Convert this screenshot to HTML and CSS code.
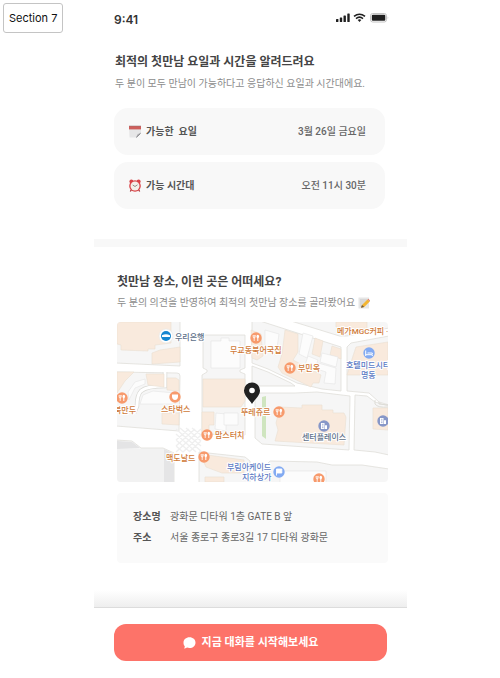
FILE: index.html
```html
<!DOCTYPE html>
<html lang="ko">
<head>
<meta charset="utf-8">
<meta name="viewport" content="width=device-width, initial-scale=1">
<title>첫만남 안내</title>
<link rel="stylesheet" href="styles.css">
</head>
<body>
<div class="board">
  <aside class="board-side"><span class="section-tag">Section 7</span></aside>

  <main class="phone">
    <header class="status">
      <span class="time">9:41</span>
      <svg class="status-icons" width="53" height="10" viewBox="0 0 53 10" aria-hidden="true">
        <g fill="#1f1f1f">
          <rect x="0" y="6" width="2.400" height="3" rx="0.6"/>
          <rect x="3.800" y="4.500" width="2.400" height="4.500" rx="0.6"/>
          <rect x="7.500" y="2.500" width="2.400" height="6.500" rx="0.6"/>
          <rect x="11.300" y="0.500" width="2.400" height="8.500" rx="0.6"/>
        </g>
        <g fill="none" stroke="#1f1f1f" stroke-width="1.600">
          <path d="M18 3.400Q23.500 -1 29 3.400"/>
          <path d="M20 5.600Q23.500 2.700 27 5.600"/>
        </g>
        <path d="M21.700 7Q23.500 5.600 25.300 7L23.500 9Z" fill="#1f1f1f"/>
        <rect x="34.500" y="0.500" width="16" height="8.500" rx="2.200" fill="#fff" stroke="#c4c4c4"/>
        <rect x="35.800" y="1.800" width="13.500" height="6" rx="1" fill="#1f1f1f"/>
        <path d="M51.700 3.300Q53 4.700 51.700 6.200Z" fill="#bdbdbd"/>
      </svg>
    </header>

    <section class="schedule">
      <div class="heading">
        <h1>최적의 첫만남 요일과 시간을 알려드려요</h1>
        <p>두 분이 모두 만남이 가능하다고 응답하신 요일과 시간대에요.</p>
      </div>
      <div class="card">
        <svg width="12" height="13" viewBox="0 0 12 13" aria-hidden="true">
          <path d="M0 1.500H12V8L8 12.500H0.500Z" fill="#e6e6e7"/>
          <path d="M12 8L7.500 12.500L8.300 9Z" fill="#c4c4c6"/>
          <path d="M7.300 12.300L11.500 8.300" stroke="#77777b" stroke-width="1"/>
          <rect y="1" width="12" height="3.400" fill="#cf5f5c"/>
          <path d="M0.500 1H11.500" stroke="#8d6f70" stroke-width="1.200" stroke-dasharray="1 1"/>
        </svg>
        <span class="card-label">가능한 &nbsp;요일</span>
        <span class="card-value">3월 26일 금요일</span>
      </div>
      <div class="card">
        <svg width="12" height="13" viewBox="0 0 12 13" aria-hidden="true">
          <path d="M2.500 10.500L1.300 12.500M9.500 10.500L10.700 12.500" stroke="#a63238" stroke-width="1.300"/>
          <circle cx="2.400" cy="2.500" r="2" fill="#d94347"/>
          <circle cx="9.600" cy="2.500" r="2" fill="#d94347"/>
          <circle cx="6" cy="7" r="5.800" fill="#d94347"/>
          <circle cx="6" cy="7" r="4.500" fill="#f4efe9"/>
          <path d="M3.700 6L6 7.500L8.500 5.800" fill="none" stroke="#77736f" stroke-width="0.800"/>
        </svg>
        <span class="card-label">가능 시간대</span>
        <span class="card-value">오전 11시 30분</span>
      </div>
    </section>

    <section class="place">
      <h2>첫만남 장소, 이런 곳은 어떠세요?</h2>
      <p class="place-note">두 분의 의견을 반영하여 최적의 첫만남 장소를 골라봤어요
        <svg width="12" height="12" viewBox="0 0 12 12" aria-hidden="true">
          <rect x="0.500" y="0.500" width="10.500" height="11" fill="#e6e6e6"/>
          <path d="M2 3H9M2 5H8M2 7H6M2 9H5" stroke="#bcbcbc" stroke-width="0.700"/>
          <path d="M3 10.800L4 8L9.500 2.500L11.800 4.600L6.200 10Z" fill="#f3b531"/>
          <path d="M9.500 2.500L10.400 1.800L12 3.600L11.800 4.600Z" fill="#df7c76"/>
          <path d="M3 10.800L4 8L6.200 10Z" fill="#6b5542"/>
        </svg>
      </p>

      <svg class="map" viewBox="0 0 271 160" role="img" aria-label="광화문 디타워 주변 지도">
        <defs>
          <g id="food">
            <circle r="5.700" fill="#f79a6c"/>
            <path d="M-2.800-3V-1.300Q-2.800 0-1.800 0V3M-1.800-3V0M-0.800-3V-1.300Q-0.800 0-1.800 0" fill="none" stroke="#fff" stroke-width="0.800"/>
            <path d="M1.800 3V-0.200" stroke="#fff" stroke-width="1"/>
            <ellipse cx="1.800" cy="-1.400" rx="1.300" ry="1.800" fill="#fff"/>
          </g>
          <g id="office">
            <circle r="5.700" fill="#8797c8"/>
            <path d="M-3 3V-3H0.500V3ZM1 3V-0.800H3V3Z" fill="#fff"/>
            <path d="M-2-1.700H-0.500M-2 0H-0.500M-2 1.600H-0.500" stroke="#8797c8" stroke-width="0.700"/>
          </g>
        </defs>
        <rect width="271" height="160" fill="#fff"/>

        <g fill="#f6f6f6" stroke="#dfded9" stroke-width="0.800">
          <path d="M-1-1H63V44L-1 41Z"/>
          <path d="M-1 50L60 51Q63 51 63 54L62 109L-1 104Z"/>
          <path d="M86 13H128V46L123 48V50L128 52V113L85 112V53L90 50V48L86 46Z"/>
          <path d="M135-1H143L224 25V69L205 67L180 61L151 47L135 41Z"/>
          <path d="M135 44L151 50L174 61L178 64H135Z"/>
          <path d="M174-1L216 12Q222 15 230 14L272 6V-1Z"/>
          <path d="M230 25L234 21L272 14V83L262 80L252 71L230 69Z"/>
          <path d="M138 71L178 71L200 70L233 74L232 128L145 122L138 116Z"/>
          <path d="M238 73L250 74L258 80L272 84V133L258 130L237 128Z"/>
          <path d="M82 130L128 135L133 139V161H82Z"/>
          <path d="M153 139L200 140L215 143L245 143L272 147V161H145V147Z"/>
          <path d="M-1 118L15 119L24 126L46 126L57 131V161H-1Z"/>
        </g>
        <path d="M0 119L15 120L23 126L0 127Z" fill="#e4e4e5"/>
        <path d="M47 127L57 132V160H47Z" fill="#e5e5e6"/>
        <path d="M0 127H47V160H0Z" fill="#f2f2f2"/>
        <path d="M48 50V64Q30 64 24 69Q20 73 20 84L17 91" fill="none" stroke="#d9d9d5" stroke-width="4.500"/>
        <path d="M48 49V64Q30 64 24 69Q20 73 20 84L17 92" fill="none" stroke="#fff" stroke-width="3"/>
        <path d="M258 78V82Q261 86 271 85M262 80V82L271 83" fill="none" stroke="#dddcd6"/>

        <g fill="#f9eadd" stroke="#eadfd2" stroke-width="0.600">
          <path d="M0 0H54V21L38 23V27H31V29L4 28V23L0 22Z"/>
          <path d="M35 31L43 28L63 25V40L35 42Z"/>
          <path d="M0 50H17L8 59L0 71Z"/>
          <path d="M29 52H47V65L31 63Z"/>
          <path d="M50 56H59L62 58V69L50 68Z"/>
          <path d="M45 91H62V103L45 102Z"/>
          <path d="M86 57H128V79L124 85H86Z"/>
          <path d="M85 90H97V103H92V112L85 113Z"/>
          <path d="M134 8L144 12L146 34L140 38L135 36Z"/>
          <path d="M168 8L181 12V30L176 38L197 49L204 53L202 61H196L194 65L165 51L161 45L165 32Z"/>
          <path d="M198 16L206 19L203 35L195 32Z"/>
          <path d="M215 24L224 27V37L213 33Z"/>
          <path d="M236 34L239 25L271 20V53H230Z"/>
          <path d="M163 85L185 86V83H205V88H216V91H227L229 95L227 123L158 119L161 108L159 101Z"/>
          <path d="M256 86H271V108L256 107Z"/>
          <path d="M83 132L127 138V151H105L89 145Z"/>
          <path d="M88 155H107V160H88Z"/>
          <path d="M219 0H250V8L232 10L219 5Z"/>
        </g>
        <g fill="#fcfcfc" stroke="#e4e4e4" stroke-width="0.600">
          <path d="M94 19H104V16H112V19H123V46H94Z"/>
          <path d="M11 70L18 60L28 57V62L18 66L12 78Z"/>
          <path d="M26 73L36 69L58 71V82H23Z"/>
          <path d="M99 91L109 92V109L98 107Z"/>
          <path d="M107 91H121V103H107Z"/>
          <path d="M186 11L196 14L190 36L182 32Z"/>
          <path d="M205 31L221 35L219 45L203 40Z"/>
          <path d="M201 41L219 46L218 62L207 61L209 50L200 47Z"/>
          <path d="M191 34L201 38L198 46L188 43Z"/>
          <path d="M148 8L162 12L159 33L148 28Z"/>
          <path d="M163 149H209V161H163Z"/>
        </g>
        <path d="M145 75L149 74V117L145 114Z" fill="#cfe5bf"/>
        <g fill="none" stroke="#efefef" stroke-width="1.400">
          <path d="M59 107L85 130M63 106L84 124M69 106L84 119M75 106L84 113M59 112L79 130M59 118L73 130M59 124L66 130M84 107L59 130M78 107L59 124M72 107L59 118M84 113L66 130M84 119L72 130"/>
        </g>

        <g class="map-food">
          <text x="113" y="31">무교동북어국집</text>
          <text x="220" y="12">메가MGC커피 ·</text>
          <text x="181" y="49">부민옥</text>
          <text x="44" y="90">스타벅스</text>
          <text x="-3" y="91">북만두</text>
          <text x="124" y="93">뚜레쥬르</text>
          <text x="98" y="116">맘스터치</text>
          <text x="49" y="139">맥도날드</text>
        </g>
        <g class="map-blue">
          <text x="229" y="46">호텔미드시티</text>
          <text x="244" y="56">명동</text>
          <text x="110" y="148">부림아케이드</text>
          <text x="125" y="158">지하상가</text>
        </g>
        <g class="map-slate">
          <text x="58" y="18">우리은행</text>
          <text x="185" y="118">센터플레이스</text>
        </g>

        <use href="#food" x="139" y="16"/>
        <use href="#food" x="173" y="46"/>
        <use href="#food" x="5" y="76"/>
        <use href="#food" x="162" y="90"/>
        <use href="#food" x="90" y="113"/>
        <use href="#food" x="87" y="135"/>
        <use href="#food" x="202" y="157"/>
        <use href="#office" x="207" y="104"/>
        <use href="#office" x="266" y="99"/>
        <circle cx="58" cy="75" r="5.700" fill="#f79a6c"/>
        <path d="M55 72.500H61V75Q60.500 78 58 78Q55.500 78 55 75Z" fill="#fff"/>
        <circle cx="252" cy="31" r="5.700" fill="#82aaf2"/>
        <path d="M248.700 28.500V34M248.700 32.700H255.300V34M255.300 32V31H250.500" fill="none" stroke="#fff" stroke-width="1"/>
        <circle cx="162" cy="150" r="5.700" fill="#82aaf2"/>
        <path d="M159.500 153.500V147H164.800V151H159.500" fill="#fff" stroke="#fff" stroke-width="0.900"/>
        <circle cx="49" cy="14" r="7" fill="#fff" stroke="#e2e5e8" stroke-width="0.600"/>
        <circle cx="49" cy="14" r="5" fill="#1686d0"/>
        <path d="M45 13.200Q49 11.400 53 13.200V15H45Z" fill="#fff"/>
        <path d="M135 82C133 78 127 74 127 68.500A8 8 0 0 1 143 68.500C143 74 137 78 135 82Z" fill="#222"/>
        <circle cx="135" cy="68.500" r="2.800" fill="#fff"/>
      </svg>

      <dl class="info">
        <dt>장소명</dt><dd>광화문 디타워 1층 GATE B 앞</dd>
        <dt>주소</dt><dd>서울 종로구 종로3길 17 디타워 광화문</dd>
      </dl>
    </section>

    <div class="fade"></div>
    <footer class="action">
      <button type="button" class="chat">
        <svg width="13" height="12" viewBox="0 0 13 12" aria-hidden="true">
          <path d="M6.500 0.300C10 0.300 12.500 2.700 12.500 5.700S10 11 6.500 11C5.500 11 4.800 10.900 4.100 10.600L1.300 11.700L1.800 9.200C0.900 8.300 0.500 7.100 0.500 5.700C0.500 2.700 3 0.300 6.500 0.300Z" fill="#fff"/>
        </svg>
        <span>지금 대화를 시작해보세요</span>
      </button>
    </footer>
  </main>
</div>
</body>
</html>
```
FILE: styles.css
```css
* {
  box-sizing: border-box;
}

body {
  margin: 0;
  background: #fff;
  color: #444;
  font-family: Roboto, "Noto Sans CJK KR", sans-serif;
  font-size: 10px;
  line-height: 16px;
}

h1, h2, p, dl, dd {
  margin: 0;
}

.board {
  display: grid;
  grid-template-columns: 94px 1fr 93px;
  min-height: 100vh;
}

.board-side {
  padding: 3px;
}

.section-tag {
  display: inline-block;
  padding: 6px 5px;
  border: 1px solid #c4c4c4;
  border-radius: 3px;
  color: #111;
  font-family: Inter, sans-serif;
  font-size: 11px;
  line-height: 16px;
  white-space: nowrap;
}

.phone {
  display: flex;
  flex-direction: column;
}

.status {
  display: flex;
  align-items: flex-start;
  justify-content: space-between;
  padding: 13px 18px 1px 20px;
}

.time {
  color: #333;
  font-family: Inter, sans-serif;
  font-size: 12px;
  font-weight: 600;
  line-height: 14px;
}

.heading {
  padding: 0 1px;
}

h1, h2 {
  color: #444;
  font-size: 12px;
  font-weight: 700;
  line-height: 20px;
}

.heading p,
.place-note {
  color: #8c8c8c;
  line-height: 16px;
  white-space: nowrap;
}

.heading p {
  margin: 4px 0 16px;
}

.schedule {
  padding: 24px 22px 30px 20px;
  border-bottom: 8px solid #f8f8f8;
}

.card {
  display: flex;
  align-items: center;
  height: 47px;
  padding: 0 19px 0 15px;
  border-radius: 14px;
  background: #f8f8f8;
}

.card + .card {
  margin-top: 7px;
}

.card-label {
  margin-left: 5px;
  color: #555;
  font-weight: 700;
}

.card-value {
  margin-left: auto;
  color: #666;
  font-weight: 500;
}

.place {
  padding: 25px 19px 0 23px;
}

.place-note {
  display: flex;
  align-items: center;
  gap: 3px;
  margin: 3px 0 11px;
}

.map {
  display: block;
  width: 100%;
  border-radius: 4px;
  font-size: 8px;
  font-weight: 500;
}

.map text {
  paint-order: stroke;
  stroke: #fff;
  stroke-width: 2px;
  stroke-linejoin: round;
}

.map-food {
  fill: #cf7a38;
}

.map-blue {
  fill: #5b7ac4;
}

.map-slate {
  fill: #5d6f88;
}

.info {
  display: grid;
  grid-template-columns: 28px 1fr;
  gap: 5px 9px;
  margin-top: 11px;
  padding: 16px 16px 17px;
  border-radius: 4px;
  background: #fafafa;
}

.info dt {
  color: #555;
  font-weight: 700;
}

.info dd {
  color: #666;
}

.fade {
  height: 18px;
  margin-top: auto;
  border-bottom: 1px solid #dcdcdc;
  background: linear-gradient(#fff, #eee);
}

.action {
  padding: 16px 20px 17px;
}

.chat {
  display: flex;
  align-items: center;
  justify-content: center;
  gap: 6px;
  width: 100%;
  height: 37px;
  padding: 1px 0 0;
  border: 0;
  border-radius: 12px;
  background: #fd7369;
  color: #fff;
  font: inherit;
  font-size: 11px;
  font-weight: 700;
}
```
